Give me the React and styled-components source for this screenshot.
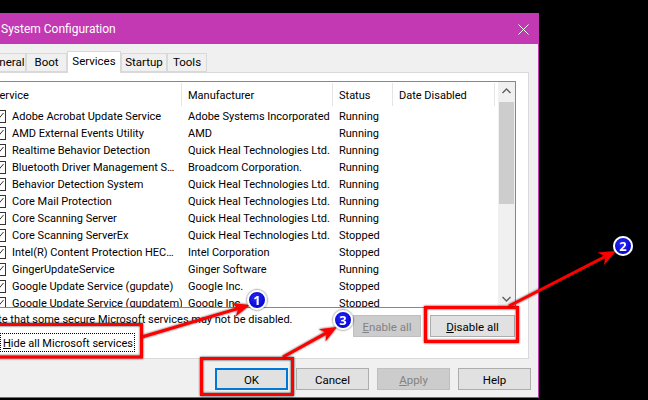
import React from "react";
import styled, { createGlobalStyle } from "styled-components";

const GlobalStyle = createGlobalStyle`
  html, body { margin: 0; padding: 0; background: #000; }
  body { font-family: Roboto, "Noto Sans", sans-serif; font-size: 11px; color: #000; }
  * { box-sizing: border-box; }
`;

const Page = styled.div`
  position: relative;
  width: 648px;
  height: 400px;
  overflow: hidden;
  background: #000;
  padding-top: 13px;
`;

const Window = styled.div`
  margin-left: -30px;
  width: 569px;
  height: 385px;
  background: #f0f0f0;
  border-right: 1px solid #c239b3;
  border-bottom: 1px solid #c239b3;
  display: flex;
  flex-direction: column;
`;

const TitleBar = styled.div`
  height: 31px;
  flex: none;
  background: #c239b3;
  color: #fff;
  display: flex;
  align-items: center;
  justify-content: space-between;
  padding-left: 31px;
  padding-top: 1px;
  font-size: 12px;
`;

const CloseBox = styled.div`
  width: 30px;
  height: 30px;
  display: flex;
  align-items: center;
  justify-content: center;
`;

const Body = styled.div`
  padding: 0 9px 0 10px;
  display: flex;
  flex-direction: column;
`;

const TabRow = styled.div`
  display: flex;
  align-items: flex-end;
  height: 21px;
  margin-top: 7px;
  margin-left: 4px;
  position: relative;
  z-index: 1;
`;

const Tab = styled.div`
  width: ${(p) => p.$w}px;
  height: ${(p) => (p.$active ? 22 : 19)}px;
  margin-bottom: ${(p) => (p.$active ? -1 : 0)}px;
  background: ${(p) => (p.$active ? "#fff" : "#f0f0f0")};
  border: 1px solid #d9d9d9;
  border-bottom: ${(p) => (p.$active ? "none" : "1px solid #d9d9d9")};
  display: flex;
  align-items: center;
  justify-content: center;
  padding-bottom: ${(p) => (p.$active ? 3 : 1)}px;
  white-space: nowrap;
  font-size: 11.5px;
`;

const Panel = styled.div`
  height: 287px;
  background: #fff;
  border: 1px solid #d9d9d9;
  padding: 8px 12px 0 5px;
  display: flex;
  flex-direction: column;
`;

const ListView = styled.div`
  height: 227px;
  border: 1px solid #828790;
  display: flex;
  flex: none;
  overflow: hidden;
`;

const Table = styled.div`
  flex: 1;
  display: flex;
  flex-direction: column;
  overflow: hidden;
`;

const HeaderRow = styled.div`
  display: flex;
  height: 25px;
  flex: none;
`;

const HeaderCell = styled.div`
  width: ${(p) => p.$w}px;
  flex: none;
  display: flex;
  align-items: center;
  padding-left: 6px;
  padding-top: 2px;
  border-right: ${(p) => (p.$sep ? "1px solid #e5e5e5" : "none")};
  margin: 1px 0 1px;
  white-space: nowrap;
`;

const Row = styled.div`
  display: flex;
  height: 17px;
  flex: none;
  align-items: center;
  padding-top: 2px;
`;

const Cell = styled.div`
  width: ${(p) => p.$w}px;
  flex: none;
  padding-left: 6px;
  display: flex;
  align-items: center;
  gap: 6px;
  white-space: nowrap;
  overflow: hidden;
`;

const CheckBox = styled.span`
  width: 13px;
  height: 13px;
  flex: none;
  border: 1px solid #333;
  background: #fff;
  display: inline-flex;
  align-items: center;
  justify-content: center;
`;

const ScrollBar = styled.div`
  width: 17px;
  flex: none;
  background: #f0f0f0;
  display: flex;
  flex-direction: column;
`;

const ScrollArrow = styled.div`
  height: 17px;
  flex: none;
  display: flex;
  align-items: center;
  justify-content: center;
`;

const Thumb = styled.div`
  height: 102px;
  margin: 3px 1px 0 1px;
  background: #cdcdcd;
`;

const ScrollSpace = styled.div`
  flex: 1;
`;

const Bottom = styled.div`
  display: flex;
  justify-content: space-between;
  margin-top: 3px;
`;

const LeftCol = styled.div`
  display: flex;
  flex-direction: column;
  margin-left: -2px;
`;

const Note = styled.div`
  height: 16px;
  line-height: 18px;
  white-space: nowrap;
`;

const HideRow = styled.div`
  height: 19px;
  margin-top: 6px;
  display: flex;
  align-items: center;
  gap: 1px;
  margin-left: 2px;
`;

const Focus = styled.span`
  border: 1px dotted #000;
  height: 19px;
  padding: 1px 1px 0 2px;
  display: flex;
  align-items: center;
  white-space: nowrap;
`;

const ButtonRow = styled.div`
  display: flex;
  gap: 9px;
  margin-top: 4px;
  margin-right: 1px;
  align-self: flex-start;
`;

const Button = styled.div`
  width: ${(p) => p.$w}px;
  height: 22px;
  display: flex;
  align-items: center;
  justify-content: center;
  padding-top: 1px;
  background: ${(p) => (p.$disabled ? "#cccccc" : "#e1e1e1")};
  border: ${(p) =>
    p.$default ? "2px solid #0078d7" : p.$disabled ? "1px solid #bfbfbf" : "1px solid #adadad"};
  color: ${(p) => (p.$disabled ? "#838383" : "#000")};
  white-space: nowrap;
  font-size: 11.5px;
`;

const U = styled.span`
  text-decoration: underline;
`;

const Footer = styled.div`
  display: flex;
  justify-content: flex-end;
  gap: 8px;
  margin-top: 9px;
  margin-right: -2px;
`;

const Overlay = styled.svg`
  position: absolute;
  left: 0;
  top: 0;
  width: 648px;
  height: 400px;
  pointer-events: none;
`;

const COLS = [195, 151, 60, 102, 3];

const rows = [
  ["Adobe Acrobat Update Service", "Adobe Systems Incorporated", "Running"],
  ["AMD External Events Utility", "AMD", "Running"],
  ["Realtime Behavior Detection", "Quick Heal Technologies Ltd.", "Running"],
  ["Bluetooth Driver Management S…", "Broadcom Corporation.", "Running"],
  ["Behavior Detection System", "Quick Heal Technologies Ltd.", "Running"],
  ["Core Mail Protection", "Quick Heal Technologies Ltd.", "Running"],
  ["Core Scanning Server", "Quick Heal Technologies Ltd.", "Running"],
  ["Core Scanning ServerEx", "Quick Heal Technologies Ltd.", "Stopped"],
  ["Intel(R) Content Protection HEC…", "Intel Corporation", "Stopped"],
  ["GingerUpdateService", "Ginger Software", "Running"],
  ["Google Update Service (gupdate)", "Google Inc.", "Stopped"],
  ["Google Update Service (gupdatem)", "Google Inc.", "Stopped"],
];

const Check = () => (
  <CheckBox>
    <svg width="11" height="11" viewBox="0 0 11 11">
      <path d="M1.5 6 L4 8.5 L9.5 2" fill="none" stroke="#333" strokeWidth="1" />
    </svg>
  </CheckBox>
);

function arrow(x1, y1, x2, y2) {
  const dx = x2 - x1, dy = y2 - y1;
  const len = Math.hypot(dx, dy);
  const ux = dx / len, uy = dy / len;
  const L = 17, W = 7;
  const bx = x2 - ux * L, by = y2 - uy * L;
  const px = -uy, py = ux;
  const nx = x2 - ux * (L - 5), ny = y2 - uy * (L - 5);
  return {
    line: [x1, y1, nx, ny],
    head: `${x2},${y2} ${bx + px * W},${by + py * W} ${nx},${ny} ${bx - px * W},${by - py * W}`,
  };
}

const arrows = [
  arrow(142, 337, 250, 305),
  arrow(509, 306, 616, 251),
  arrow(283, 357, 337, 327),
];

const badges = [
  [257, 300, "1"],
  [623, 246, "2"],
  [343, 320, "3"],
];

export default function App() {
  return (
    <>
      <GlobalStyle />
      <Page>
        <Window>
          <TitleBar>
            <span>System Configuration</span>
            <CloseBox>
              <svg width="11" height="11" viewBox="0 0 11 11">
                <path d="M0.5 0.5 L10.5 10.5 M10.5 0.5 L0.5 10.5" stroke="#fff" strokeWidth="1" />
              </svg>
            </CloseBox>
          </TitleBar>
          <Body>
            <TabRow>
              <Tab $w={42}>General</Tab>
              <Tab $w={41}>Boot</Tab>
              <Tab $w={54} $active>Services</Tab>
              <Tab $w={46}>Startup</Tab>
              <Tab $w={40}>Tools</Tab>
            </TabRow>
            <Panel>
              <ListView>
                <Table>
                  <HeaderRow>
                    <HeaderCell $w={COLS[0]} $sep>Service</HeaderCell>
                    <HeaderCell $w={COLS[1]} $sep>Manufacturer</HeaderCell>
                    <HeaderCell $w={COLS[2]} $sep>Status</HeaderCell>
                    <HeaderCell $w={COLS[3]} $sep>Date Disabled</HeaderCell>
                  </HeaderRow>
                  {rows.map((r) => (
                    <Row key={r[0]}>
                      <Cell $w={COLS[0]}>
                        <Check />
                        <span>{r[0]}</span>
                      </Cell>
                      <Cell $w={COLS[1]}>{r[1]}</Cell>
                      <Cell $w={COLS[2]}>{r[2]}</Cell>
                      <Cell $w={COLS[3]} />
                    </Row>
                  ))}
                </Table>
                <ScrollBar>
                  <ScrollArrow>
                    <svg width="9" height="6" viewBox="0 0 9 6">
                      <path d="M0.5 5 L4.5 1 L8.5 5" fill="none" stroke="#606060" strokeWidth="1.4" />
                    </svg>
                  </ScrollArrow>
                  <Thumb />
                  <ScrollSpace />
                  <ScrollArrow>
                    <svg width="9" height="6" viewBox="0 0 9 6">
                      <path d="M0.5 1 L4.5 5 L8.5 1" fill="none" stroke="#606060" strokeWidth="1.4" />
                    </svg>
                  </ScrollArrow>
                </ScrollBar>
              </ListView>
              <Bottom>
                <LeftCol>
                  <Note>Note that some secure Microsoft services may not be disabled.</Note>
                  <HideRow>
                    <CheckBox />
                    <Focus>
                      <span>
                        <U>H</U>ide all Microsoft services
                      </span>
                    </Focus>
                  </HideRow>
                </LeftCol>
                <ButtonRow>
                  <Button $w={68} $disabled>
                    <span>
                      <U>E</U>nable all
                    </span>
                  </Button>
                  <Button $w={85}>
                    <span>
                      <U>D</U>isable all
                    </span>
                  </Button>
                </ButtonRow>
              </Bottom>
            </Panel>
            <Footer>
              <Button $w={73} $default>OK</Button>
              <Button $w={73}>Cancel</Button>
              <Button $w={73} $disabled>
                <span>
                  <U>A</U>pply
                </span>
              </Button>
              <Button $w={73}>Help</Button>
            </Footer>
          </Body>
        </Window>
        <Overlay viewBox="0 0 648 400">
          <defs>
            <filter id="sh" x="-20%" y="-20%" width="140%" height="140%">
              <feDropShadow dx="0" dy="0" stdDeviation="1" floodColor="#000" floodOpacity="0.8" />
            </filter>
            <radialGradient id="bg" cx="45%" cy="40%" r="60%">
              <stop offset="0%" stopColor="#2a2aff" />
              <stop offset="100%" stopColor="#0000c8" />
            </radialGradient>
          </defs>
          <g filter="url(#sh)" fill="none" stroke="#ff0000" strokeWidth="3">
            <rect x="-5" y="324.5" width="146.5" height="32.5" />
            <rect x="201.5" y="358.5" width="91" height="36" />
            <rect x="425.5" y="307.5" width="92" height="34" />
          </g>
          <g filter="url(#sh)">
            {arrows.map((a, i) => (
              <g key={i}>
                <line x1={a.line[0]} y1={a.line[1]} x2={a.line[2]} y2={a.line[3]} stroke="#ff0000" strokeWidth="3" />
                <polygon points={a.head} fill="#ff0000" />
              </g>
            ))}
          </g>
          {badges.map(([cx, cy, n]) => (
            <g key={n} filter="url(#sh)">
              <circle cx={cx} cy={cy} r="9" fill="url(#bg)" stroke="#fff" strokeWidth="2" />
              <text
                x={cx}
                y={cy + 4.5}
                textAnchor="middle"
                fill="#fff"
                fontSize="13"
                fontWeight="700"
                fontFamily="Noto Sans, sans-serif"
              >
                {n}
              </text>
            </g>
          ))}
        </Overlay>
      </Page>
    </>
  );
}
